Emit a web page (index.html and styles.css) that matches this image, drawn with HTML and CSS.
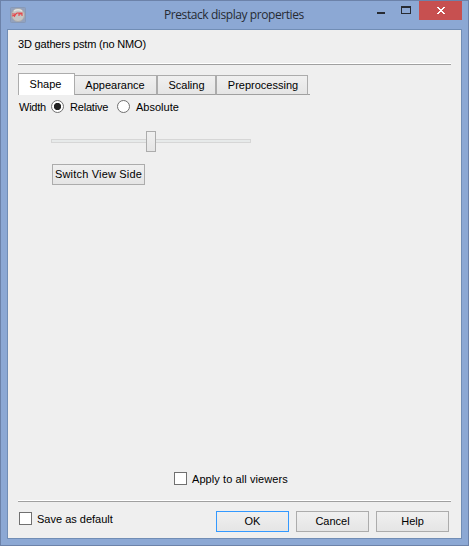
FILE: index.html
```html
<!DOCTYPE html>
<html lang="en">
<head>
<meta charset="utf-8">
<title>Prestack display properties</title>
<link rel="stylesheet" href="styles.css">
</head>
<body>
<main class="window">
  <header class="titlebar">
    <svg class="app-icon" width="16" height="16" viewBox="0 0 16 16">
      <rect x=".5" y=".5" width="15" height="15" rx="1" fill="#93a2bd" stroke="#8799b8"/>
      <circle cx="8" cy="8" r="6.500" fill="#c5c5c3" stroke="#aaa9aa"/>
      <path d="M4 4Q8 1.500 12 4" fill="none" stroke="#e2e2df" stroke-width="1.500"/>
      <path d="M2 7h4l1-1h5v1H9v2M2 9l3-1M12 6v3M6 7L4 10" fill="none" stroke="#e5484c" stroke-width="1.100"/>
    </svg>
    <h1 class="title">Prestack display properties</h1>
    <div class="controls">
      <svg width="42" height="19" viewBox="0 0 42 19" shape-rendering="crispEdges">
        <path d="M0 11h8v2H0z" fill="#272b33"/>
        <path d="M24 5h10v8H24zM25 7v5h8V7z" fill="#272b33" fill-rule="evenodd"/>
      </svg>
      <div class="close">
        <svg width="8" height="7" viewBox="0 0 8 7" shape-rendering="crispEdges"><path d="M0 0h2v1h1v1h2V1h1V0h2v1H7v1H6v1H5v1h1v1h1v1h1v1H6V6H5V5H3v1H2v1H0V6h1V5h1V4h1V3H2V2H1V1H0z" fill="#fff"/></svg>
      </div>
    </div>
  </header>
  <section class="client">
    <p class="subject">3D gathers pstm (no NMO)</p>
    <div class="rule"></div>
    <nav class="tabs">
      <div class="tab active">Shape</div>
      <div class="tab appearance">Appearance</div>
      <div class="tab scaling">Scaling</div>
      <div class="tab preprocessing">Preprocessing</div>
      <div class="tab-end"></div>
    </nav>
    <div class="width-row">
      <span class="width-label">Width</span>
      <i class="radio checked"></i><span class="relative">Relative</span>
      <i class="radio"></i><span class="absolute">Absolute</span>
    </div>
    <div class="slider"><div class="track"></div><div class="thumb"></div><div class="track"></div></div>
    <div class="button switch">Switch View Side</div>
    <div class="apply"><i class="check"></i><span class="apply-label">Apply to all viewers</span></div>
    <div class="rule"></div>
    <footer class="footer">
      <i class="check"></i><span class="save">Save as default</span>
      <div class="actions">
        <div class="button primary">OK</div>
        <div class="button">Cancel</div>
        <div class="button">Help</div>
      </div>
    </footer>
  </section>
</main>
</body>
</html>
```
FILE: styles.css
```css
* { box-sizing: border-box; }
body { margin: 0; overflow: hidden; }
.window {
  width: 469px; height: 546px;
  border: 1px solid #6c82a9;
  background: #8ca8d4;
  font: 11px/13px "Liberation Sans", Arial, sans-serif;
  color: #000;
  white-space: nowrap;
}
.titlebar { display: flex; height: 28px; padding-left: 9px; }
.app-icon { margin-top: 6px; }
.title {
  margin: 5px 0 0 138px; width: 213px;
  font: 12px/18px "Open Sans", sans-serif;
  letter-spacing: -.42px;
  color: #272b33;
}
.controls { display: flex; }
.close {
  display: flex; align-items: center; justify-content: center;
  width: 43px; height: 19px; background: #c75050;
}
.client {
  width: 455px; height: 510px; margin-left: 6px;
  padding: 8px 10px 0;
  border: 1px solid #718db5;
  background: #efefef;
}
.subject { height: 25px; margin: 0; letter-spacing: -.17px; }
.rule { width: 433px; height: 2px; border-top: 1px solid #fff; border-bottom: 1px solid #a0a0a0; }
.tabs { display: flex; align-items: flex-end; height: 22px; margin-top: 8px; }
.tab {
  display: flex; align-items: center; justify-content: center;
  height: 20px;
  border: 1px solid #acacac; border-left-width: 0;
  border-bottom-color: #a0a0a0;
  background: linear-gradient(#f0f0f0, #e5e5e5);
}
.tab.active { width: 57px; height: 22px; padding-right: 2px; background: #fff; border-left-width: 1px; border-bottom: 0; }
.appearance { width: 82px; padding-right: 1px; }
.scaling { width: 59px; border-left-width: 1px; }
.preprocessing { width: 92px; padding-left: 2px; border-left-width: 1px; }
.tab-end { width: 2px; height: 1px; background: #a0a0a0; }
.width-row { display: flex; align-items: center; height: 13px; margin-top: 5px; }
.width-label { width: 33px; padding: 1px 0 0 1px; letter-spacing: -.25px; }
.radio {
  width: 13px; height: 13px;
  border: 1px solid #707070; border-radius: 50%;
  background: #fff;
}
.radio.checked { background: radial-gradient(circle, #222 3.3px, #fff 4px); }
.relative { width: 53px; padding: 1px 0 0 6px; letter-spacing: -.2px; }
.absolute { padding: 1px 0 0 6px; }
.slider { display: flex; align-items: center; height: 21px; margin: 18px 0 0 33px; }
.track { width: 95px; height: 4px; margin-bottom: 1px; border: 1px solid #d6d6d6; background: #e7eaea; }
.slider .track:first-child { border-right: 0; }
.slider .track:last-child { border-left: 0; }
.thumb { width: 10px; height: 21px; border: 1px solid #acacac; background: linear-gradient(#f0f0f0, #e5e5e5); }
.button {
  display: flex; align-items: center; justify-content: center;
  width: 73px; height: 21px;
  border: 1px solid #acacac;
  background: linear-gradient(#f0f0f0, #e5e5e5);
}
.switch { width: 93px; margin: 12px 0 0 34px; letter-spacing: .18px; }
.primary { border-color: #3399ff; }
.apply { display: flex; align-items: center; gap: 5px; height: 13px; margin: 287px 0 15px 156px; }
.apply-label { padding-top: 2px; letter-spacing: .08px; }
.check { flex: none; width: 13px; height: 13px; border: 1px solid #707070; background: #fff; }
.footer { display: flex; margin-top: 9px; padding-left: 1px; }
.footer .check { margin-top: 1px; }
.save { width: 184px; padding: 2px 0 0 5px; }
.actions { display: flex; gap: 7px; }
```
